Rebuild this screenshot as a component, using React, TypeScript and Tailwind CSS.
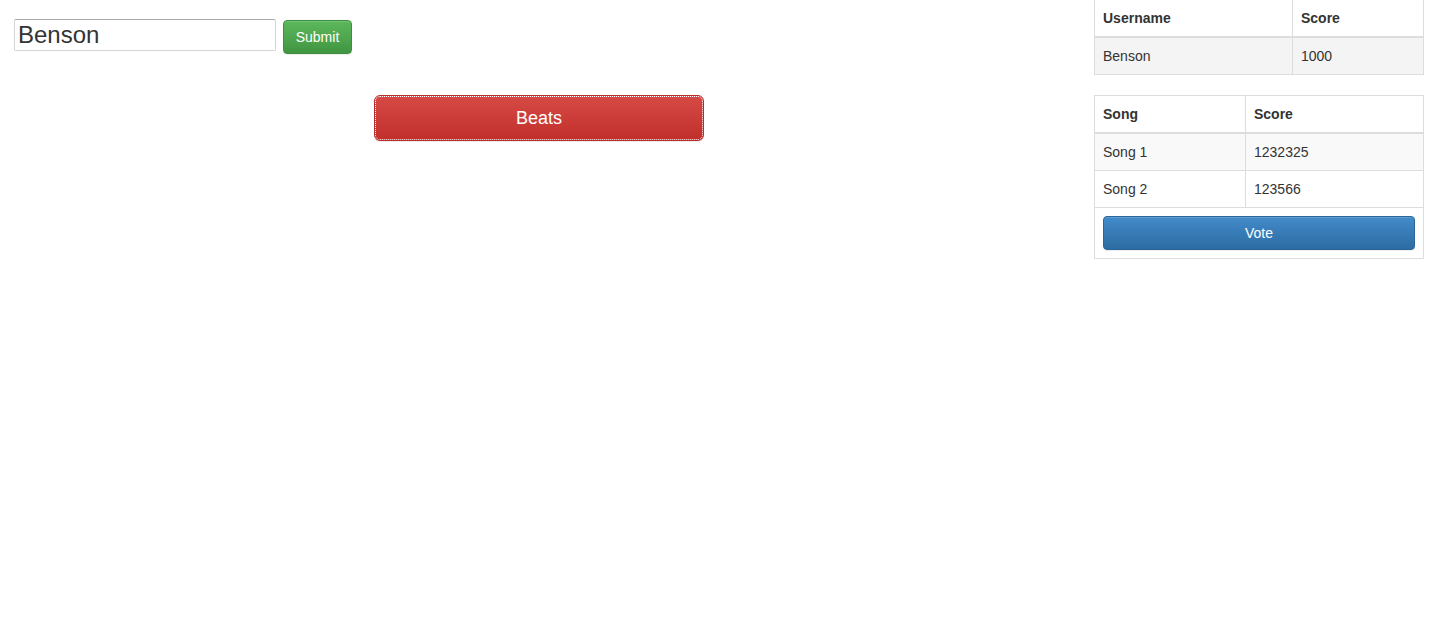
import { useState } from 'react';

type SongRow = { song: string; score: number };

const songs: SongRow[] = [
  { song: 'Song 1', score: 1232325 },
  { song: 'Song 2', score: 123566 },
];

const App = () => {
  const [name, setName] = useState('Benson');

  return (
    <div className="min-h-screen bg-white text-[#333] text-sm font-['Liberation_Sans',Arial,sans-serif]">
      <div className="flex">
        {/* Left: name form + beats button */}
        <div className="flex-1">
          <form className="flex items-start pt-[19px] pl-[14px]" onSubmit={(e) => e.preventDefault()}>
            <input
              value={name}
              onChange={(e) => setName(e.target.value)}
              className="w-[262px] h-[32px] px-[3px] border border-[#d5d5d5] border-t-[#aaa] rounded-[2px] text-[24px] leading-none text-[#333] outline-none"
            />
            <button
              type="submit"
              className="ml-[7px] mt-px h-[34px] w-[69px] rounded-[4px] border border-[#3e8f3e] bg-gradient-to-b from-[#5cb85c] to-[#419641] text-white text-sm shadow-[inset_0_1px_0_rgba(255,255,255,0.15),0_1px_1px_rgba(0,0,0,0.075)]"
            >
              Submit
            </button>
          </form>

          <div className="pl-[374px] pt-[41px]">
            <button className="w-[330px] h-[46px] pt-px rounded-[6px] border border-[#b92c28] bg-gradient-to-b from-[#d64a46] to-[#c12e2a] text-white text-[18px] outline-1 outline-dotted outline-white outline-offset-[-2px] shadow-[inset_0_1px_0_rgba(255,255,255,0.15),0_1px_1px_rgba(0,0,0,0.075)]">
              Beats
            </button>
          </div>
        </div>

        {/* Right: leaderboard + songs */}
        <div className="w-[330px] mr-[10px]">
          <table className="-mt-px w-full border-collapse border border-[#ddd]">
            <thead>
              <tr>
                <th className="w-[198px] text-left font-bold px-2 py-2 leading-5 border border-[#ddd] border-b-2">Username</th>
                <th className="text-left font-bold px-2 py-2 leading-5 border border-[#ddd] border-b-2">Score</th>
              </tr>
            </thead>
            <tbody>
              <tr className="bg-[#f4f4f4]">
                <td className="px-2 py-2 leading-5 border border-[#ddd]">Benson</td>
                <td className="px-2 py-2 leading-5 border border-[#ddd]">1000</td>
              </tr>
            </tbody>
          </table>

          <table className="mt-5 w-full border-collapse border border-[#ddd]">
            <thead>
              <tr>
                <th className="w-[151px] text-left font-bold px-2 py-2 leading-5 border border-[#ddd] border-b-2">Song</th>
                <th className="text-left font-bold px-2 py-2 leading-5 border border-[#ddd] border-b-2">Score</th>
              </tr>
            </thead>
            <tbody>
              {songs.map((s, idx) => (
                <tr key={s.song} className={idx % 2 === 0 ? 'bg-[#f9f9f9]' : 'bg-white'}>
                  <td className="px-2 py-2 leading-5 border border-[#ddd]">{s.song}</td>
                  <td className="px-2 py-2 leading-5 border border-[#ddd]">{s.score}</td>
                </tr>
              ))}
              <tr>
                <td colSpan={2} className="p-2 border border-[#ddd]">
                  <button className="block w-full h-[34px] rounded-[4px] border border-[#2b669a] bg-gradient-to-b from-[#428bca] to-[#2d6ca2] text-white text-sm shadow-[inset_0_1px_0_rgba(255,255,255,0.15),0_1px_1px_rgba(0,0,0,0.075)]">
                    Vote
                  </button>
                </td>
              </tr>
            </tbody>
          </table>
        </div>
      </div>
    </div>
  );
};

export default App;
